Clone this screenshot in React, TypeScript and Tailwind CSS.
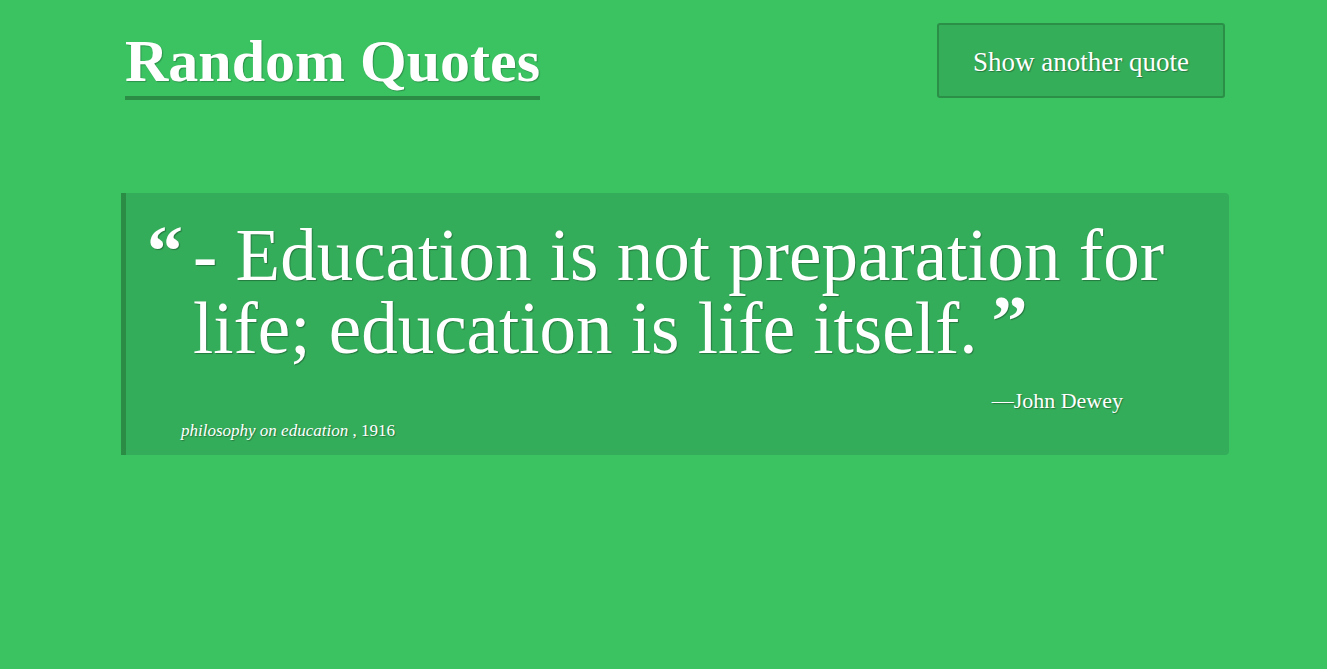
export default function App() {
  const serif = { fontFamily: '"Liberation Serif", "DejaVu Serif", serif' };
  return (
    <div className="min-h-[669px] w-full bg-[#3bc362] text-white" style={serif}>
      <div className="ml-[121px] w-[1108px] pt-[23px]">
        <header className="flex items-start justify-between">
          <h1 className="ml-[4px] mt-[6px] border-b-[4px] border-[#2b8c46] pb-[3px] text-[60px] font-bold leading-[64px] [text-shadow:1px_1px_1px_rgba(0,0,0,0.25)]">
            Random Quotes
          </h1>
          <button className="mr-[4px] h-[75px] w-[288px] rounded-[3px] border-2 border-[#2b8f48] bg-[#35ae5a] pt-[3px] text-[27px] text-white [text-shadow:1px_1px_1px_rgba(0,0,0,0.3)]">
            Show another quote
          </button>
        </header>
        <blockquote className="mt-[93px] h-[262px] rounded-r-[4px] border-l-[5px] border-[#2a8c45] bg-[#34ad5a] pl-[21px] pr-[30px] pt-[26px] [text-shadow:1px_1px_1px_rgba(0,0,0,0.3)]">
          <div className="flex">
            <span className="mr-[10px] mt-[-4px] text-[72px] font-bold leading-[72px]">“</span>
            <p className="text-[73px] leading-[73px]">
              - Education is not preparation for life; education is life itself.
              <span className="relative top-[-8px] ml-[14px] text-[72px] font-bold leading-none">”</span>
            </p>
          </div>
          <div className="mt-[24px] pr-[76px] text-right text-[22px] leading-[24px]">—John Dewey</div>
          <div className="ml-[34px] mt-[8px] text-[17px] leading-[20px]">
            <cite className="italic">philosophy on education</cite> , 1916
          </div>
        </blockquote>
      </div>
    </div>
  );
}
